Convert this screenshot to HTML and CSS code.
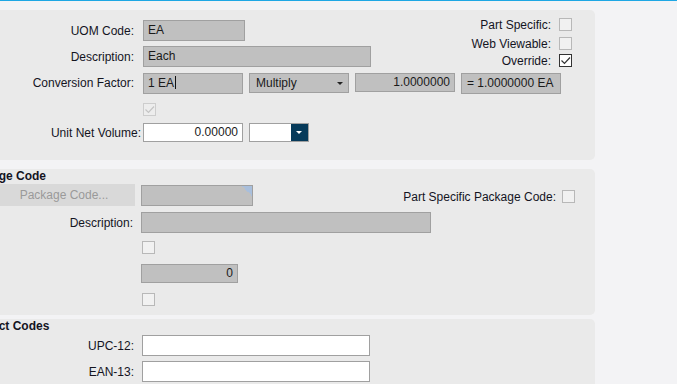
FILE: index.html
```html
<!DOCTYPE html>
<html lang="en">
<head>
<meta charset="UTF-8">
<meta name="viewport" content="width=device-width, initial-scale=1.0">
<title>UOM</title>
<link rel="stylesheet" href="styles.css">
</head>
<body>
<div class="page">

    <!-- UOM -->
    <div class="panel panel-uom">
        <div class="top">
            <div class="top-left">
                <div class="row">
                    <span class="lbl">UOM Code:</span>
                    <div class="field ro w102">EA</div>
                </div>
                <div class="row r2">
                    <span class="lbl">Description:</span>
                    <div class="field ro w228">Each</div>
                </div>
            </div>
            <div class="checks">
                <div class="chk-row"><span>Part Specific:</span><span class="box"></span></div>
                <div class="chk-row c2"><span>Web Viewable:</span><span class="box"></span></div>
                <div class="chk-row c3"><span>Override:</span><span class="box on">
                    <svg width="11" height="11" viewBox="0 0 11 11"><polyline points="1.5,5.5 4.5,8.5 10,2.5" fill="none" stroke="#333" stroke-width="1.2"/></svg>
                </span></div>
            </div>
        </div>
        <div class="row r3">
            <span class="lbl">Conversion Factor:</span>
            <div class="field ro w100">1 EA<span class="caret"></span></div>
            <div class="field ro w100 h20 select">Multiply<span class="arrow"></span></div>
            <div class="field ro w100 h19 num">1.0000000</div>
            <div class="field ro w100 eq">= 1.0000000 EA</div>
        </div>
        <div class="row r4">
            <span class="lbl"></span>
            <span class="box dis">
                <svg width="11" height="11" viewBox="0 0 11 11"><polyline points="1.5,5.5 4.5,8.5 10,2.5" fill="none" stroke="#c4c4c4" stroke-width="1.2"/></svg>
            </span>
        </div>
        <div class="row r5">
            <span class="lbl lbl-wide">Unit Net Volume:</span>
            <div class="field edit w100 h19 num">0.00000</div>
            <div class="field edit w60 h19 combo"><span class="combo-btn"><span class="arrow white"></span></span></div>
        </div>
    </div>

    <!-- Package Code -->
    <div class="panel panel-pkg">
        <div class="title">Package Code</div>
        <div class="row">
            <button class="pick">Package Code...</button>
            <div class="field ro w112"><span class="tri"></span></div>
            <div class="row-right">
                <span>Part Specific Package Code:</span><span class="box"></span>
            </div>
        </div>
        <div class="row p2">
            <span class="lbl">Description:</span>
            <div class="field ro w290"></div>
        </div>
        <div class="row p3">
            <span class="lbl"></span>
            <span class="box nudge"></span>
        </div>
        <div class="row p4">
            <span class="lbl"></span>
            <div class="field ro w97 h19 num">0</div>
        </div>
        <div class="row p5">
            <span class="lbl"></span>
            <span class="box nudge"></span>
        </div>
    </div>

    <!-- Product Codes -->
    <div class="panel panel-prod">
        <div class="title">Product Codes</div>
        <div class="row q1">
            <span class="lbl">UPC-12:</span>
            <div class="field edit w228 nudge"></div>
        </div>
        <div class="row q2">
            <span class="lbl">EAN-13:</span>
            <div class="field edit w228 nudge"></div>
        </div>
    </div>

</div>
</body>
</html>
```

FILE: styles.css
```css
body {
    margin: 0;
    background-color: #f3f3f5;
    border-top: 1px solid #1ea7e4;
    font-family: "Liberation Sans", Arial, sans-serif;
    font-size: 12px;
    color: #14141f;
    overflow: hidden;
    height: 383px;
}
.page {
    margin-left: -40px;
    width: 635px;
    padding-top: 9px;
}
.panel {
    background-color: #eaeaea;
    border-radius: 0 5px 5px 0;
    box-sizing: border-box;
    padding-right: 20px;
}
.row {
    display: flex;
    align-items: center;
}
.lbl {
    width: 174px;
    margin-right: 9px;
    text-align: right;
    white-space: nowrap;
    flex-shrink: 0;
}
.lbl-wide {
    width: 181px;
    margin-right: 2px;
}
.field {
    box-sizing: border-box;
    height: 21px;
    line-height: 19px;
    border: 1px solid #a0a0a0;
    padding: 0 4px;
    white-space: nowrap;
    color: #1a1a1a;
    flex-shrink: 0;
    position: relative;
}
.ro { background-color: #c0c0c0; }
.edit { background-color: #fff; }
.w60 { width: 60px; }
.w97 { width: 97px; }
.w100 { width: 100px; }
.w102 { width: 102px; }
.w112 { width: 112px; }
.w228 { width: 228px; }
.w290 { width: 290px; }
.h19 { height: 19px; line-height: 17px; }
.h20 { height: 20px; line-height: 18px; }
.num { text-align: right; }
.caret {
    display: inline-block;
    width: 1px;
    height: 13px;
    background-color: #111;
    vertical-align: -2px;
    margin-left: 1px;
}
.arrow {
    position: absolute;
    right: 5px;
    top: 8px;
    border-left: 3px solid transparent;
    border-right: 3px solid transparent;
    border-top: 3px solid #222;
}
.arrow.white {
    border-top-color: #fff;
    right: 6px;
    top: 7px;
}
.select { padding-left: 6px; }
.eq { padding-left: 5px; }
.combo { padding: 0; }
.combo-btn {
    position: absolute;
    right: 0;
    top: 0;
    bottom: 0;
    width: 17px;
    background-color: #063a5a;
}
.box {
    display: inline-block;
    box-sizing: border-box;
    width: 13px;
    height: 13px;
    border: 1px solid #b8b8b8;
    background-color: #f1f1f1;
    flex-shrink: 0;
    position: relative;
}
.box svg {
    position: absolute;
    left: 0;
    top: 0;
}
.box.on {
    border-color: #333;
    background-color: #fff;
}
.box.dis {
    border-color: #cdcdcd;
    background-color: #ededed;
}

/* UOM panel */
.panel-uom {
    padding-top: 8px;
    padding-bottom: 18px;
    padding-right: 23px;
}
.top {
    display: flex;
    justify-content: space-between;
    align-items: flex-start;
}
.top-left { margin-top: 2px; }
.r2 { margin-top: 5px; }
.checks {
    display: flex;
    flex-direction: column;
    align-items: flex-end;
}
.chk-row {
    display: flex;
    align-items: center;
    height: 13px;
    gap: 8px;
}
.c2 { margin-top: 6px; }
.c3 { margin-top: 4px; }
.r3 {
    margin-top: 6px;
    align-items: flex-start;
    gap: 6px;
}
.r3 .lbl {
    margin-right: 3px;
    line-height: 21px;
}
.r4 { margin-top: 9px; }
.r5 { margin-top: 7px; gap: 6px; }
.r5 .lbl { margin-right: -4px; }

/* Package panel */
.panel-pkg {
    margin-top: 9px;
    padding-bottom: 9px;
}
.title {
    font-weight: bold;
    line-height: 14px;
    padding-left: 4px;
    margin-bottom: 1px;
}
.panel-pkg .lbl {
    width: 173px;
    margin-right: 8px;
}
.pick {
    width: 142px;
    height: 22px;
    margin-left: 33px;
    margin-right: 6px;
    border: none;
    background-color: #d9d9d9;
    color: #9a9a9a;
    font-family: inherit;
    font-size: 12px;
    padding: 0;
}
.tri {
    position: absolute;
    right: 0;
    top: 0;
    width: 10px;
    height: 10px;
    background: linear-gradient(to bottom left, #a9bfdc 50%, transparent 50%);
}
.row-right {
    margin-left: auto;
    display: flex;
    align-items: center;
    gap: 6px;
    margin-top: 3px;
}
.nudge { margin-left: 1px; }
.p2 { margin-top: 6px; }
.p3 { margin-top: 8px; }
.p4 { margin-top: 10px; }
.p5 { margin-top: 10px; }

/* Product panel */
.panel-prod {
    margin-top: 4px;
    padding-bottom: 20px;
}
.panel-prod .lbl {
    width: 174px;
    margin-right: 7px;
}
.q1 { margin-top: 2px; }
.q2 { margin-top: 5px; }
```
